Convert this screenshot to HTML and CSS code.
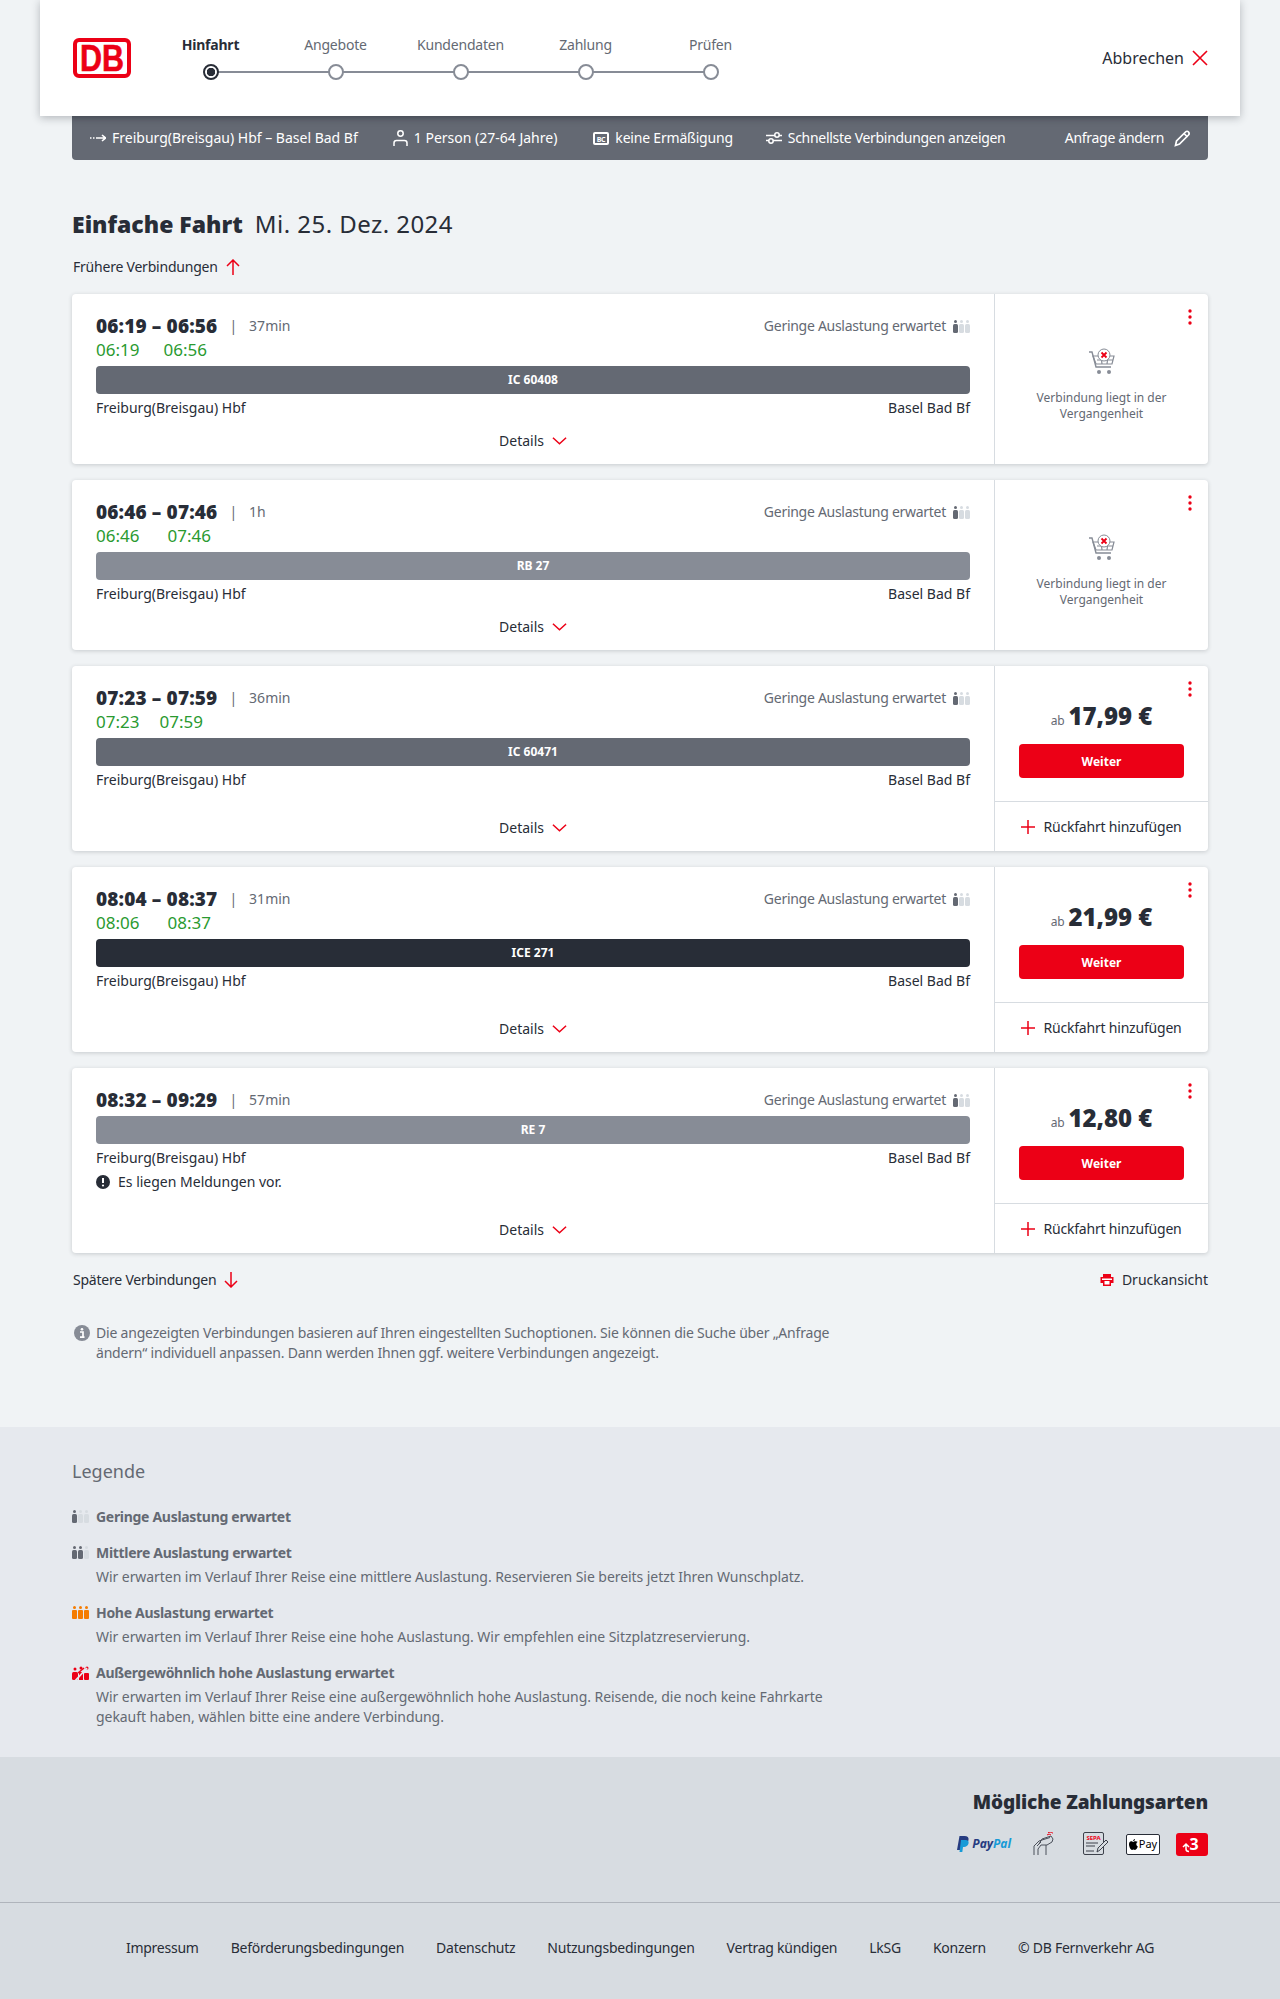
FILE: index.html
```html
<!DOCTYPE html>
<html lang="de">
<head>
    <meta charset="UTF-8">
    <title>Einfache Fahrt</title>
    <link rel="stylesheet" href="styles.css">
</head>
<body>
    <svg class="defs" width="0" height="0">
        <symbol id="load1" viewBox="0 0 17 13">
            <circle cx="2.5" cy="1.5" r="1.5" fill="#646973"/><rect y="4" width="5" height="9" rx="1.5" fill="#646973"/>
            <circle cx="8.5" cy="1.5" r="1.5" fill="#d7dce1"/><rect x="6" y="4" width="5" height="9" rx="1.5" fill="#d7dce1"/>
            <circle cx="14.5" cy="1.5" r="1.5" fill="#d7dce1"/><rect x="12" y="4" width="5" height="9" rx="1.5" fill="#d7dce1"/>
        </symbol>
        <symbol id="load2" viewBox="0 0 17 13">
            <circle cx="2.5" cy="1.5" r="1.5" fill="#646973"/><rect y="4" width="5" height="9" rx="1.5" fill="#646973"/>
            <circle cx="8.5" cy="1.5" r="1.5" fill="#646973"/><rect x="6" y="4" width="5" height="9" rx="1.5" fill="#646973"/>
            <circle cx="14.5" cy="1.5" r="1.5" fill="#d7dce1"/><rect x="12" y="4" width="5" height="9" rx="1.5" fill="#d7dce1"/>
        </symbol>
        <symbol id="load3" viewBox="0 0 17 13">
            <circle cx="2.5" cy="1.5" r="1.5" fill="#f57c00"/><rect y="4" width="5" height="9" rx="1" fill="#f57c00"/>
            <circle cx="8.5" cy="1.5" r="1.5" fill="#f57c00"/><rect x="6" y="4" width="5" height="9" rx="1" fill="#f57c00"/>
            <circle cx="14.5" cy="1.5" r="1.5" fill="#f57c00"/><rect x="12" y="4" width="5" height="9" rx="1" fill="#f57c00"/>
        </symbol>
        <symbol id="load4" viewBox="0 0 17 14">
            <circle cx="3" cy="3" r="1.5" fill="#ec0016"/><rect y="6" width="6" height="8" rx="1.500" fill="#ec0016"/>
            <circle cx="9" cy="2" r="1.500" fill="#ec0016"/><rect x="7" y="6" width="4" height="8" fill="#ec0016"/>
            <circle cx="15" cy="2" r="1.500" fill="#ec0016"/><rect x="12" y="7" width="5" height="7" rx="1" fill="#ec0016"/>
            <path d="M3 15L15 2" stroke="#e6e9ee" stroke-width="1.800"/>
            <path d="M6 7l6-5" stroke="#ec0016" stroke-width="1.600"/>
        </symbol>
        <symbol id="chevron" viewBox="0 0 16 10">
            <path d="M1 1.5l7 6.5 7-6.5" fill="none" stroke="#ec0016" stroke-width="1.6"/>
        </symbol>
        <symbol id="dots" viewBox="0 0 4 16">
            <circle cx="2" cy="2" r="1.7" fill="#ec0016"/><circle cx="2" cy="8" r="1.7" fill="#ec0016"/><circle cx="2" cy="14" r="1.7" fill="#ec0016"/>
        </symbol>
        <symbol id="plus" viewBox="0 0 14 14">
            <path d="M7 0v14M0 7h14" fill="none" stroke="#ec0016" stroke-width="1.5"/>
        </symbol>
        <symbol id="cart" viewBox="0 0 28 28">
            <path d="M1 4h3l4 15h15" fill="none" stroke="#878c96" stroke-width="1.4"/>
            <path d="M5 8h21l-2 8H8zM9 12h16M13 8l1 8M20 8l-1 8" fill="none" stroke="#878c96" stroke-width="1.2"/>
            <circle cx="16" cy="7" r="6" fill="#fff" stroke="#878c96" stroke-width="1"/>
            <path d="M13.5 4.5l5 5M18.5 4.5l-5 5" stroke="#ec0016" stroke-width="1.8"/>
            <circle cx="11" cy="24" r="2" fill="#878c96"/><circle cx="21" cy="24" r="2" fill="#878c96"/>
        </symbol>
    </svg>

    <header class="top">
        <svg class="logo" width="58" height="40" viewBox="0 0 58 40">
            <rect x="2" y="2" width="54" height="36" rx="4" fill="#fff" stroke="#ec0016" stroke-width="4"/>
            <text x="29" y="33" text-anchor="middle" textLength="44" lengthAdjust="spacingAndGlyphs" class="logo-text">DB</text>
        </svg>
        <ol class="steps">
            <li class="step step-active"><span>Hinfahrt</span><i></i></li>
            <li class="step"><span>Angebote</span><i></i></li>
            <li class="step"><span>Kundendaten</span><i></i></li>
            <li class="step"><span>Zahlung</span><i></i></li>
            <li class="step"><span>Prüfen</span><i></i></li>
        </ol>
        <a class="cancel">Abbrechen
            <svg width="16" height="16" viewBox="0 0 16 16"><path d="M1 1l14 14M15 1L1 15" stroke="#ec0016" stroke-width="1.6"/></svg>
        </a>
    </header>

    <main class="page">
        <div class="query">
            <span class="query-item query-route">
                <svg width="16" height="10" viewBox="0 0 16 10"><path d="M0 5h1.500M3 5h1.500M6 5h9M12 2l3.500 3-3.500 3" fill="none" stroke="#fff" stroke-width="1.600"/></svg>
                Freiburg(Breisgau) Hbf – Basel Bad Bf
            </span>
            <span class="query-item query-person">
                <svg width="15" height="16" viewBox="0 0 15 16"><circle cx="7.500" cy="3.500" r="2.700" fill="none" stroke="#fff" stroke-width="1.500"/><path d="M1 16v-3c0-1.500 1-2.500 2.500-2.500h8c1.500 0 2.500 1 2.500 2.500v3" fill="none" stroke="#fff" stroke-width="1.500"/></svg>
                1 Person (27-64 Jahre)
            </span>
            <span class="query-item query-card">
                <svg width="16" height="13" viewBox="0 0 16 13"><rect width="16" height="13" rx="2" fill="#fff"/><rect x="2" y="2" width="12" height="9" fill="#646973"/><text x="8" y="9.500" text-anchor="middle" class="bc-text">BC</text></svg>
                keine Ermäßigung
            </span>
            <span class="query-item query-fast">
                <svg width="16" height="12" viewBox="0 0 16 12"><path d="M0 3.500h16M0 8.500h16" stroke="#fff" stroke-width="1.600"/><circle cx="11" cy="3" r="2.200" fill="#646973" stroke="#fff" stroke-width="1.500"/><circle cx="5" cy="9" r="2.200" fill="#646973" stroke="#fff" stroke-width="1.500"/></svg>
                Schnellste Verbindungen anzeigen
            </span>
            <span class="query-item query-edit">Anfrage ändern
                <svg width="17" height="17" viewBox="0 0 17 17"><path d="M1.500 15.500l1-4.500L11.500 2c1-1 2.200-1 3 0s1 2 0 3l-9 9z" fill="none" stroke="#fff" stroke-width="1.700"/><path d="M10 3.500l3.500 3.500" stroke="#fff" stroke-width="1.700"/></svg>
            </span>
        </div>

        <h1 class="title"><b>Einfache Fahrt</b> <span>Mi. 25. Dez. 2024</span></h1>

        <a class="more more-top">Frühere Verbindungen
            <svg width="14" height="16" viewBox="0 0 14 16"><path d="M7 16V1M1 7l6-6 6 6" fill="none" stroke="#ec0016" stroke-width="1.500"/></svg>
        </a>

        <section class="card">
            <div class="trip">
                <div class="trip-head">
                    <span class="times">06:19 – 06:56</span><span class="sep">|</span><span class="duration">37min</span>
                    <span class="load">Geringe Auslastung erwartet <svg width="17" height="13"><use href="#load1"/></svg></span>
                </div>
                <div class="live"><span>06:19</span><span>06:56</span></div>
                <div class="train train-ic">IC 60408</div>
                <div class="stations"><span>Freiburg(Breisgau) Hbf</span><span>Basel Bad Bf</span></div>
                <a class="details">Details <svg width="15" height="10"><use href="#chevron"/></svg></a>
            </div>
            <div class="side side-past">
                <svg class="dots" width="4" height="16"><use href="#dots"/></svg>
                <svg width="28" height="28"><use href="#cart"/></svg>
                <p>Verbindung liegt in der Vergangenheit</p>
            </div>
        </section>

        <section class="card">
            <div class="trip">
                <div class="trip-head">
                    <span class="times">06:46 – 07:46</span><span class="sep">|</span><span class="duration">1h</span>
                    <span class="load">Geringe Auslastung erwartet <svg width="17" height="13"><use href="#load1"/></svg></span>
                </div>
                <div class="live live-wide"><span>06:46</span><span>07:46</span></div>
                <div class="train train-regio">RB 27</div>
                <div class="stations"><span>Freiburg(Breisgau) Hbf</span><span>Basel Bad Bf</span></div>
                <a class="details">Details <svg width="15" height="10"><use href="#chevron"/></svg></a>
            </div>
            <div class="side side-past">
                <svg class="dots" width="4" height="16"><use href="#dots"/></svg>
                <svg width="28" height="28"><use href="#cart"/></svg>
                <p>Verbindung liegt in der Vergangenheit</p>
            </div>
        </section>

        <section class="card">
            <div class="trip">
                <div class="trip-head">
                    <span class="times">07:23 – 07:59</span><span class="sep">|</span><span class="duration">36min</span>
                    <span class="load">Geringe Auslastung erwartet <svg width="17" height="13"><use href="#load1"/></svg></span>
                </div>
                <div class="live live-narrow"><span>07:23</span><span>07:59</span></div>
                <div class="train train-ic">IC 60471</div>
                <div class="stations"><span>Freiburg(Breisgau) Hbf</span><span>Basel Bad Bf</span></div>
                <a class="details">Details <svg width="15" height="10"><use href="#chevron"/></svg></a>
            </div>
            <div class="side">
                <svg class="dots" width="4" height="16"><use href="#dots"/></svg>
                <div class="offer">
                    <div class="price"><small>ab</small> <b>17,99 €</b></div>
                    <button class="btn">Weiter</button>
                </div>
                <a class="add"><svg width="14" height="14"><use href="#plus"/></svg> Rückfahrt hinzufügen</a>
            </div>
        </section>

        <section class="card">
            <div class="trip">
                <div class="trip-head">
                    <span class="times">08:04 – 08:37</span><span class="sep">|</span><span class="duration">31min</span>
                    <span class="load">Geringe Auslastung erwartet <svg width="17" height="13"><use href="#load1"/></svg></span>
                </div>
                <div class="live live-wide"><span>08:06</span><span>08:37</span></div>
                <div class="train train-ice">ICE 271</div>
                <div class="stations"><span>Freiburg(Breisgau) Hbf</span><span>Basel Bad Bf</span></div>
                <a class="details">Details <svg width="15" height="10"><use href="#chevron"/></svg></a>
            </div>
            <div class="side">
                <svg class="dots" width="4" height="16"><use href="#dots"/></svg>
                <div class="offer">
                    <div class="price"><small>ab</small> <b>21,99 €</b></div>
                    <button class="btn">Weiter</button>
                </div>
                <a class="add"><svg width="14" height="14"><use href="#plus"/></svg> Rückfahrt hinzufügen</a>
            </div>
        </section>

        <section class="card">
            <div class="trip">
                <div class="trip-head">
                    <span class="times">08:32 – 09:29</span><span class="sep">|</span><span class="duration">57min</span>
                    <span class="load">Geringe Auslastung erwartet <svg width="17" height="13"><use href="#load1"/></svg></span>
                </div>
                <div class="train train-regio">RE 7</div>
                <div class="stations"><span>Freiburg(Breisgau) Hbf</span><span>Basel Bad Bf</span></div>
                <div class="notice">
                    <svg width="14" height="14" viewBox="0 0 14 14"><circle cx="7" cy="7" r="7" fill="#282d37"/><path d="M7 3v5" stroke="#fff" stroke-width="2"/><circle cx="7" cy="10.500" r="1.100" fill="#fff"/></svg>
                    Es liegen Meldungen vor.
                </div>
                <a class="details">Details <svg width="15" height="10"><use href="#chevron"/></svg></a>
            </div>
            <div class="side">
                <svg class="dots" width="4" height="16"><use href="#dots"/></svg>
                <div class="offer">
                    <div class="price"><small>ab</small> <b>12,80 €</b></div>
                    <button class="btn">Weiter</button>
                </div>
                <a class="add"><svg width="14" height="14"><use href="#plus"/></svg> Rückfahrt hinzufügen</a>
            </div>
        </section>

        <div class="below">
            <a class="more">Spätere Verbindungen
                <svg width="14" height="16" viewBox="0 0 14 16"><path d="M7 0v15M1 9l6 6 6-6" fill="none" stroke="#ec0016" stroke-width="1.500"/></svg>
            </a>
            <a class="print">
                <svg width="14" height="14" viewBox="0 0 14 14"><path d="M3 1h8v3h2.500v6H11v3H3v-3H.5V4H3z" fill="#ec0016"/><rect x="2" y="5.500" width="10" height="1.500" fill="#fff"/><rect x="4.500" y="8" width="5" height="3.500" fill="#fff"/></svg>
                Druckansicht
            </a>
        </div>

        <div class="hint">
            <svg width="16" height="16" viewBox="0 0 16 16"><circle cx="8" cy="8" r="8" fill="#878c96"/><circle cx="8" cy="4.300" r="1.300" fill="#fff"/><path d="M6 7h3v5M6 12.200h4.500" fill="none" stroke="#fff" stroke-width="1.700"/></svg>
            <p>Die angezeigten Verbindungen basieren auf Ihren eingestellten Suchoptionen. Sie können die Suche über „Anfrage ändern“ individuell anpassen. Dann werden Ihnen ggf. weitere Verbindungen angezeigt.</p>
        </div>
    </main>

    <section class="legend">
        <div class="legend-inner">
            <h2>Legende</h2>
            <div class="legend-item">
                <svg width="17" height="13"><use href="#load1"/></svg>
                <div><h3>Geringe Auslastung erwartet</h3></div>
            </div>
            <div class="legend-item">
                <svg width="17" height="13"><use href="#load2"/></svg>
                <div><h3>Mittlere Auslastung erwartet</h3><p>Wir erwarten im Verlauf Ihrer Reise eine mittlere Auslastung. Reservieren Sie bereits jetzt Ihren Wunschplatz.</p></div>
            </div>
            <div class="legend-item">
                <svg width="17" height="13"><use href="#load3"/></svg>
                <div><h3>Hohe Auslastung erwartet</h3><p>Wir erwarten im Verlauf Ihrer Reise eine hohe Auslastung. Wir empfehlen eine Sitzplatzreservierung.</p></div>
            </div>
            <div class="legend-item">
                <svg width="17" height="14"><use href="#load4"/></svg>
                <div><h3>Außergewöhnlich hohe Auslastung erwartet</h3><p>Wir erwarten im Verlauf Ihrer Reise eine außergewöhnlich hohe Auslastung. Reisende, die noch keine Fahrkarte gekauft haben, wählen bitte eine andere Verbindung.</p></div>
            </div>
        </div>
    </section>

    <section class="payment">
        <div class="payment-inner">
            <h2>Mögliche Zahlungsarten</h2>
            <div class="pay-icons">
                <span class="paypal">
                    <svg width="12" height="16" viewBox="0 0 12 16"><path d="M2.500 0h5c3 0 4.500 1.500 4 4-.5 3-2.500 4.500-5 4.500H4.500L3.500 14H0z" fill="#253b80"/><path d="M4 4h4.500c2.500 0 3.500 1.500 3 3.500S9 11 7 11H6l-.7 5H2.500z" fill="#179bd7"/></svg>
                    <b>Pay</b><b class="pal">Pal</b>
                </span>
                <svg class="pay-hand" width="22" height="24" viewBox="0 0 22 24"><path d="M1 23v-9l5-5 3-1M5 23v-6l3-4h6l5-3 1-3-2-3-9 3-3 5M4 14l4-4M9 8l8-2.500M13 13v10" fill="none" stroke="#4b505a" stroke-width="1"/><path d="M14 3c1.500-1 3-1 4 0M15 .8c1.500-.8 3-.8 5 .4" fill="none" stroke="#ec0016" stroke-width="1"/></svg>
                <svg class="pay-sepa" width="26" height="24" viewBox="0 0 26 24"><rect x=".5" y=".5" width="20" height="22" rx="1.500" fill="none" stroke="#3c414b"/><text x="10.500" y="8" text-anchor="middle" class="sepa-text">SEPA</text><path d="M3 11h12M3 14h9M3 19h8" stroke="#3c414b"/><path d="M14 20l1-4 8-8 2 2-8 8z" fill="#d7dce1" stroke="#3c414b"/></svg>
                <span class="applepay">
                    <svg width="9" height="11" viewBox="0 0 9 11"><path d="M6.200 2.300c-1 0-1.400.6-2 .6s-1.100-.6-2-.6C1 2.300 0 3.500 0 5.300 0 7.500 1.500 11 3 11c.6 0 .9-.4 1.500-.4s.9.4 1.500.4c1.200 0 2.500-2.500 2.800-3.500-2-1-2-3.800 0-4.500-.5-.5-1.600-.7-2.600-.7zM6 0C5 .1 4 1 4.200 2.100 5.200 2.100 6.100 1.100 6 0z" fill="#000"/></svg>
                    <span>Pay</span>
                </span>
                <span class="pay-red">
                    <svg width="24" height="23" viewBox="0 0 24 23"><text x="14" y="17" text-anchor="middle" class="red-text">3</text><path d="M3 14l3-3 3 3M6 11v5c0 1.500 1 2.500 3 2.500" fill="none" stroke="#fff" stroke-width="1.500"/></svg>
                </span>
            </div>
        </div>
    </section>

    <footer class="foot">
        <a>Impressum</a>
        <a>Beförderungsbedingungen</a>
        <a>Datenschutz</a>
        <a>Nutzungsbedingungen</a>
        <a>Vertrag kündigen</a>
        <a>LkSG</a>
        <a>Konzern</a>
        <a>© DB Fernverkehr AG</a>
    </footer>
</body>
</html>
```

FILE: styles.css
```css
* {
    box-sizing: border-box;
}

body {
    margin: 0;
    background-color: #f0f3f5;
    color: #282d37;
    font-family: "Noto Sans", Arial, sans-serif;
    font-size: 14px;
    line-height: 20px;
}

a {
    color: inherit;
}

svg {
    flex: none;
}

.defs {
    position: absolute;
}

/* header */

.top {
    position: relative;
    z-index: 2;
    display: flex;
    align-items: center;
    width: 1200px;
    height: 116px;
    margin: 0 auto;
    padding: 0 32px 0 33px;
    background-color: #fff;
    box-shadow: 0 2px 8px rgba(40, 45, 55, 0.3);
}

.logo-text {
    font-family: "Liberation Sans", Arial, sans-serif;
    font-size: 36px;
    font-weight: 700;
    fill: #ec0016;
    stroke: #ec0016;
    stroke-width: 0.6px;
}

.steps {
    display: flex;
    margin: -2px 0 0 17px;
    padding: 0;
    list-style: none;
}

.step {
    position: relative;
    display: flex;
    flex-direction: column;
    align-items: center;
    gap: 9px;
    width: 125px;
    color: #646973;
    letter-spacing: -0.2px;
}

.step span {
    height: 20px;
}

.step i {
    position: relative;
    z-index: 1;
    width: 16px;
    height: 16px;
    border: 2px solid #878c96;
    border-radius: 50%;
    background-color: #fff;
}

.step:not(:last-child)::after {
    content: "";
    position: absolute;
    left: 50%;
    top: 36px;
    width: 100%;
    height: 2px;
    background-color: #878c96;
}

.step-active {
    color: #282d37;
    font-weight: 700;
}

.step-active i {
    border-color: #282d37;
    background: radial-gradient(circle, #282d37 4px, #fff 4.5px);
}

.cancel {
    display: flex;
    align-items: center;
    gap: 8px;
    margin-left: auto;
    font-size: 16px;
}

/* search bar */

.page {
    width: 1136px;
    margin: 0 auto;
    padding-bottom: 64px;
}

.query {
    display: flex;
    align-items: center;
    height: 44px;
    padding: 0 17px 0 18px;
    border-radius: 0 0 4px 4px;
    background-color: #646973;
    color: #fff;
    box-shadow: inset 0 6px 6px -6px rgba(40, 45, 55, 0.5);
}

.query-item {
    display: flex;
    align-items: center;
    gap: 6px;
    white-space: nowrap;
}

.query-person {
    margin-left: 35px;
}

.query-card {
    margin-left: 36px;
    letter-spacing: -0.2px;
}

.query-fast {
    margin-left: 33px;
    letter-spacing: -0.3px;
}

.query-edit {
    gap: 10px;
    margin-left: auto;
    letter-spacing: -0.3px;
}

.bc-text {
    font-size: 7px;
    font-weight: 700;
    fill: #fff;
}

.title {
    display: flex;
    gap: 12px;
    margin: 48px 0 0;
    font-size: 24px;
    font-weight: 400;
    line-height: 32px;
}

.title b {
    font-size: 23px;
    font-weight: 900;
}

.title span {
    letter-spacing: 0.45px;
}

.more {
    display: inline-flex;
    align-items: center;
    gap: 8px;
    margin-left: 1px;
    letter-spacing: -0.22px;
}

.more-top {
    margin-top: 17px;
    margin-bottom: 17px;
    vertical-align: top;
}

/* cards */

.card {
    display: grid;
    grid-template-columns: 923px 213px;
    margin-bottom: 16px;
    border-radius: 4px;
    background-color: #fff;
    box-shadow: 0 1px 4px rgba(40, 45, 55, 0.2);
}

.trip {
    display: flex;
    flex-direction: column;
    min-height: 170px;
    padding: 20px 24px 0;
    border-right: 1px solid #d7dce1;
}

.trip-head {
    display: flex;
    align-items: center;
    height: 24px;
}

.times {
    font-size: 19px;
    font-weight: 900;
    letter-spacing: 0.15px;
}

.sep {
    margin: 0 12px;
    color: #646973;
}

.duration {
    color: #646973;
}

.load {
    display: flex;
    align-items: center;
    gap: 7px;
    margin-left: auto;
    color: #646973;
    letter-spacing: -0.28px;
}

.live {
    display: flex;
    gap: 24px;
    height: 24px;
    color: #2a9a30;
    font-size: 17px;
    line-height: 24px;
}

.live-wide {
    gap: 28px;
}

.live-narrow {
    gap: 20px;
}

.train {
    height: 28px;
    margin-top: 4px;
    border-radius: 4px;
    color: #fff;
    font-size: 12px;
    font-weight: 700;
    line-height: 28px;
    text-align: center;
}

.train-ic {
    background-color: #646973;
}

.train-regio {
    background-color: #878c96;
}

.train-ice {
    background-color: #282d37;
}

.stations {
    display: flex;
    justify-content: space-between;
    margin-top: 4px;
}

.notice {
    display: flex;
    align-items: center;
    gap: 8px;
    margin-top: 4px;
}

.details {
    display: flex;
    align-items: center;
    justify-content: center;
    gap: 8px;
    height: 46px;
    margin-top: auto;
}

.side {
    position: relative;
    display: flex;
    flex-direction: column;
}

.dots {
    position: absolute;
    top: 15px;
    right: 16px;
}

.side-past {
    align-items: center;
    padding-top: 54px;
    color: #646973;
    font-size: 12px;
    line-height: 16px;
    text-align: center;
}

.side-past p {
    width: 150px;
    margin: 14px 0 0;
}

.offer {
    height: 136px;
    padding: 35px 24px 0;
    border-bottom: 1px solid #d7dce1;
}

.price {
    height: 31px;
    line-height: 30px;
    text-align: center;
}

.price small {
    color: #646973;
    font-size: 12px;
}

.price b {
    font-size: 24px;
    font-weight: 900;
}

.btn {
    display: block;
    width: 165px;
    height: 34px;
    margin-top: 12px;
    border: none;
    border-radius: 4px;
    background-color: #ec0016;
    color: #fff;
    font-family: inherit;
    font-size: 12px;
    font-weight: 700;
}

.add {
    display: flex;
    align-items: center;
    justify-content: center;
    gap: 8px;
    flex: 1;
    min-height: 49px;
    letter-spacing: -0.2px;
}

.below {
    display: flex;
    justify-content: space-between;
    margin-top: 17px;
}

.print {
    display: flex;
    align-items: center;
    gap: 8px;
}

.hint {
    display: flex;
    gap: 6px;
    width: 762px;
    margin: 33px 0 0 2px;
    color: #646973;
    letter-spacing: -0.2px;
}

.hint svg {
    margin-top: 2px;
}

.hint p {
    margin: 0;
}

/* legend */

.legend {
    height: 330px;
    background-color: #e6e9ee;
    color: #646973;
}

.legend-inner {
    width: 1136px;
    margin: 0 auto;
    padding-top: 32px;
}

.legend h2 {
    margin: 0 0 24px;
    font-size: 18px;
    font-weight: 400;
    line-height: 24px;
}

.legend-item {
    display: flex;
    gap: 7px;
    margin-bottom: 16px;
}

.legend-item svg {
    margin-top: 3px;
}

.legend-item h3 {
    margin: 0;
    font-size: 14px;
    font-weight: 700;
    line-height: 20px;
    letter-spacing: -0.3px;
}

.legend-item p {
    width: 760px;
    margin: 4px 0 0;
    letter-spacing: -0.06px;
}

/* payment and footer */

.payment {
    height: 146px;
    border-bottom: 1px solid #afb4bb;
    background-color: #d7dce1;
}

.payment-inner {
    width: 1136px;
    margin: 0 auto;
    padding-top: 31px;
    text-align: right;
}

.payment h2 {
    margin: 0;
    font-size: 19px;
    font-weight: 900;
    line-height: 28px;
    letter-spacing: -0.15px;
}

.pay-icons {
    display: flex;
    align-items: center;
    justify-content: flex-end;
    height: 24px;
    margin-top: 16px;
}

.paypal {
    display: flex;
    align-items: center;
    gap: 3px;
    color: #253b80;
    font-size: 12px;
    font-style: italic;
    line-height: 16px;
}

.paypal .pal {
    margin-left: -3px;
    color: #179bd7;
}

.pay-hand {
    margin-left: 22px;
}

.pay-sepa {
    margin-left: 28px;
}

.sepa-text {
    font-size: 6px;
    font-weight: 700;
    fill: #ec0016;
}

.applepay {
    display: flex;
    align-items: center;
    justify-content: center;
    gap: 1px;
    width: 34px;
    height: 21px;
    margin-left: 17px;
    border: 1px solid #282d37;
    border-radius: 2px;
    background-color: #fff;
    color: #000;
    font-size: 11px;
}

.pay-red {
    display: flex;
    align-items: center;
    justify-content: center;
    width: 32px;
    height: 23px;
    margin-left: 16px;
    border-radius: 3px;
    background-color: #ec0016;
}

.red-text {
    font-size: 16px;
    font-weight: 700;
    fill: #fff;
}

.foot {
    display: flex;
    justify-content: center;
    gap: 32px;
    height: 96px;
    padding-top: 35px;
    background-color: #d7dce1;
    letter-spacing: -0.25px;
}
```
